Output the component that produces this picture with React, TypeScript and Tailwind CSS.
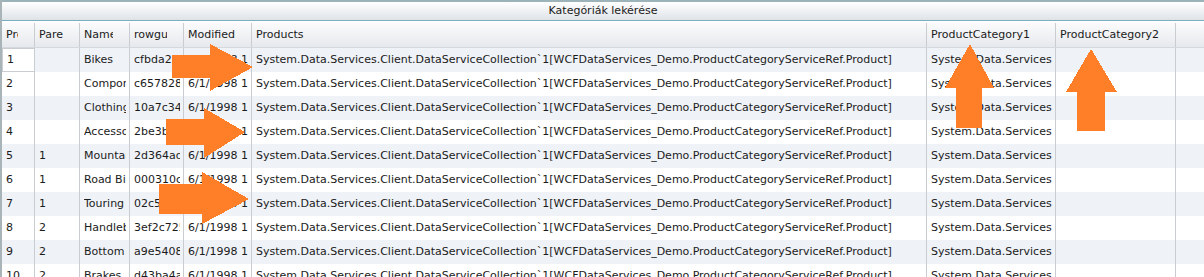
import React from 'react'

const columns = [
  { label: 'ProductCategoryID', width: 'w-[33px]' },
  { label: 'ParentProductCategoryID', width: 'w-[45px]' },
  { label: 'Name', width: 'w-[50px]' },
  { label: 'rowguid', width: 'w-[54px]' },
  { label: 'ModifiedDate', width: 'w-[68px]' },
  { label: 'Products', width: 'w-[675px]' },
  { label: 'ProductCategory1', width: 'w-[129px]' },
  { label: 'ProductCategory2', width: 'w-[120px]' },
]

const products =
  'System.Data.Services.Client.DataServiceCollection`1[WCFDataServices_Demo.ProductCategoryServiceRef.Product]'
const cat1 = 'System.Data.Services.Client.DataServiceCollection`1[WCFDataServices_Demo.ProductCategoryServiceRef.ProductCategory]'

const rows = [
  ['1', '', 'Bikes', 'cfbda25c-df71-47a7-b81b-64ee161aa37c'],
  ['2', '', 'Components', 'c657828d-d808-4aba-91a3-af2ce02300e9'],
  ['3', '', 'Clothing', '10a7c342-ca82-48d4-8a38-46a2eb089b74'],
  ['4', '', 'Accessories', '2be3be36-d9a2-4eee-b593-ed895d97c2a6'],
  ['5', '1', 'Mountain Bikes', '2d364ade-264a-433c-b092-4fcbf3804e01'],
  ['6', '1', 'Road Bikes', '000310c0-bcc8-42c4-b0c3-45ae611af06b'],
  ['7', '1', 'Touring Bikes', '02c5061d-ecdc-4274-b5f1-e91d76bc3f37'],
  ['8', '2', 'Handlebars', '3ef2c725-7135-4c85-9ae6-ae9a3bdd9283'],
  ['9', '2', 'Bottom Brackets', 'a9e54089-8a1e-4cf5-8646-e3801f685934'],
  ['10', '2', 'Brakes', 'd43ba4a3-ef0d-426b-90eb-4be4547dd30c'],
]

export default function App() {
  return (
    <div
      className="relative w-[1204px] h-[277px] overflow-hidden bg-white border-l-2 border-[#a9b4b8] text-[11px] text-[#1b1b1b]"
      style={{ fontFamily: '"DejaVu Sans", Verdana, sans-serif' }}
    >
      {/* title bar */}
      <div className="h-[22px] border-t-2 border-[#9db3ba] bg-white">
        <div className="h-[19px] rounded-tl-[3px] bg-gradient-to-b from-white to-[#dfe3e8] border-b border-[#79aebd] flex items-center justify-center">
          Kategóriák lekérése
        </div>
      </div>

      {/* header, text stops short of the sort glyph area */}
      <div className="flex h-[25px] mt-[1px] bg-gradient-to-b from-[#fbfbfc] to-[#e6e9ed] border-b border-[#d5d8dc]">
        {columns.map((c) => (
          <div key={c.label} className={`${c.width} shrink-0 border-r border-[#c9ccd0] pl-[4px] pr-[16px] flex items-center`}>
            <span className="block overflow-hidden whitespace-nowrap">{c.label}</span>
          </div>
        ))}
        <div className="flex-1" />
      </div>

      {/* rows */}
      {rows.map((r, i) => (
        <div key={r[0]} className={`flex h-[24px] ${i % 2 === 0 ? 'bg-[#eff2f7]' : 'bg-white'}`}>
          {[...r, '6/1/1998 12:00:00 AM', products, cat1, ''].map((v, j) => (
            <div
              key={j}
              className={`${columns[j].width} shrink-0 border-r border-[#c9ccd0] pl-[4px] pr-[3px] flex items-center ${
                i === 0 && j === 0 ? 'border border-[#9fd6e2] bg-white pl-[3px]' : ''
              }`}
            >
              <span className="block overflow-hidden whitespace-nowrap">{v}</span>
            </div>
          ))}
          <div className="flex-1" />
        </div>
      ))}

      {/* orange arrows drawn over the grid */}
      <svg className="absolute inset-0 pointer-events-none" width="1204" height="277" shapeRendering="crispEdges">
        <g fill="#fe7f27">
          <polygon points="170,55 208,55 208,44 251,67 208,91 208,78 170,78" />
          <polygon points="164,119 202,119 202,108 243,132 202,158 202,145 164,145" />
          <polygon points="157,184 200,184 200,172 247,199 200,224 200,214 157,214" />
          <polygon points="968,44 992,88 980,88 980,128 954,128 954,88 943,88" />
          <polygon points="1089,49 1115,92 1103,92 1103,131 1075,131 1075,92 1064,92" />
        </g>
      </svg>
    </div>
  )
}
